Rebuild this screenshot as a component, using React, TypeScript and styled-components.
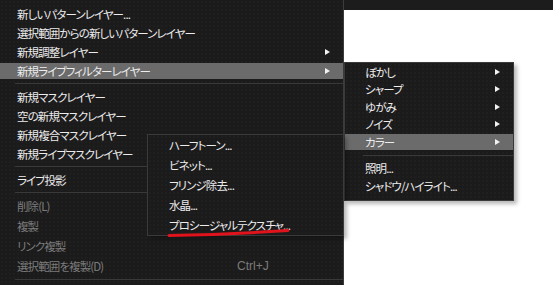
import styled, { createGlobalStyle, css } from "styled-components";

type Entry = {
  label?: string;
  shortcut?: string;
  sub?: boolean;
  active?: boolean;
  disabled?: boolean;
  sep?: boolean;
  tall?: boolean;
};

const mainItems: Entry[] = [
  { label: "新しいパターンレイヤー..." },
  { label: "選択範囲からの新しいパターンレイヤー" },
  { label: "新規調整レイヤー", sub: true },
  { label: "新規ライブフィルターレイヤー", sub: true, active: true },
  { sep: true },
  { label: "新規マスクレイヤー" },
  { label: "空の新規マスクレイヤー" },
  { label: "新規複合マスクレイヤー" },
  { label: "新規ライブマスクレイヤー" },
  { sep: true },
  { label: "ライブ投影" },
  { sep: true },
  { label: "削除(L)", disabled: true, tall: true },
  { label: "複製", disabled: true, tall: true },
  { label: "リンク複製", disabled: true, tall: true },
  { label: "選択範囲を複製(D)", shortcut: "Ctrl+J", disabled: true, tall: true },
  { sep: true },
];

const filterItems: Entry[] = [
  { label: "ぼかし", sub: true },
  { label: "シャープ", sub: true },
  { label: "ゆがみ", sub: true },
  { label: "ノイズ", sub: true },
  { label: "カラー", sub: true, active: true },
  { sep: true },
  { label: "照明..." },
  { label: "シャドウ/ハイライト..." },
];

const colorItems = [
  "ハーフトーン...",
  "ビネット...",
  "フリンジ除去...",
  "水晶...",
  "プロシージャルテクスチャ...",
];

const GlobalStyle = createGlobalStyle`
  html, body {
    margin: 0;
    padding: 0;
    background: #ffffff;
  }
  body {
    font-family: "Noto Sans CJK JP", "Noto Sans", sans-serif;
  }
`;

const Screen = styled.div`
  position: relative;
  display: flex;
  width: 553px;
  height: 285px;
  overflow: hidden;
  background: #ffffff;
`;

const menuSurface = css`
  box-sizing: border-box;
  margin: 0;
  list-style: none;
  background-color: #1c1b1c;
  background-image: radial-gradient(rgba(255, 255, 255, 0.03) 0.6px, transparent 0.9px);
  background-size: 4px 4px;
  color: #ececec;
  font-size: 11.5px;
  letter-spacing: -0.9px;
  font-feature-settings: "palt";
`;

const MainMenu = styled.ul`
  ${menuSurface}
  flex: none;
  width: 344px;
  padding: 4px 0 0;
  border-right: 1px solid #3c3c3c;
`;

const Workspace = styled.div`
  flex: 1;
  display: flex;
  flex-direction: column;
`;

const TopBar = styled.div`
  height: 10px;
  background: #1d1c1d;
`;

const Canvas = styled.div`
  flex: 1;
  background: #ffffff;
`;

const Popup = styled.ul<{ $left: number; $top: number; $width: number }>`
  ${menuSurface}
  position: absolute;
  left: ${(p) => p.$left}px;
  top: ${(p) => p.$top}px;
  width: ${(p) => p.$width}px;
  border: 1px solid #3a3a3a;
  box-shadow: 3px 3px 4px rgba(0, 0, 0, 0.28);
`;

const FilterMenu = styled(Popup)`
  padding: 0 0 5px;
`;

const ColorMenu = styled(Popup)`
  padding: 0;
`;

const Item = styled.li<{ $active?: boolean; $disabled?: boolean; $h: number }>`
  display: flex;
  align-items: center;
  height: ${(p) => p.$h}px;
  white-space: nowrap;
  color: ${(p) => (p.$disabled ? "#7b7b7b" : "#ececec")};
  ${(p) =>
    p.$active &&
    css`
      background: linear-gradient(#6b6b6b, #6b6b6b) center / 100% 16px no-repeat;
    `}
`;

const MainItem = styled(Item)`
  padding: 0 13px 0 17px;
`;

const FilterItem = styled(Item)`
  padding: 0 13px 0 20px;
`;

const ColorItem = styled(Item)`
  padding: 0 12px 0 21px;
`;

const Separator = styled.li<{ $inset: number; $space: number }>`
  height: 1px;
  margin: ${(p) => p.$space}px 0 ${(p) => p.$space}px ${(p) => p.$inset}px;
  background: #393939;
`;

const Arrow = styled.span`
  margin-left: auto;
  width: 0;
  height: 0;
  border-left: 5px solid #f2f2f2;
  border-top: 3.5px solid transparent;
  border-bottom: 3.5px solid transparent;
`;

const Shortcut = styled.span`
  margin-left: auto;
  width: 93px;
  font-family: "Liberation Sans", "Noto Sans", sans-serif;
  font-size: 12px;
  letter-spacing: 0;
`;

const Mark = styled.svg`
  position: absolute;
  left: 166px;
  top: 226px;
  overflow: visible;
`;

export default function App() {
  return (
    <>
      <GlobalStyle />
      <Screen>
        <MainMenu>
          {mainItems.map((it, i) =>
            it.sep ? (
              <Separator key={i} $inset={15} $space={3} />
            ) : (
              <MainItem key={i} $h={it.tall ? 20 : 19} $active={it.active} $disabled={it.disabled}>
                {it.label}
                {it.sub && <Arrow />}
                {it.shortcut && <Shortcut>{it.shortcut}</Shortcut>}
              </MainItem>
            )
          )}
        </MainMenu>
        <Workspace>
          <TopBar />
          <Canvas />
        </Workspace>

        <FilterMenu $left={344} $top={62} $width={170}>
          {filterItems.map((it, i) =>
            it.sep ? (
              <Separator key={i} $inset={18} $space={4} />
            ) : (
              <FilterItem key={i} $h={17.5} $active={it.active}>
                {it.label}
                {it.sub && <Arrow />}
              </FilterItem>
            )
          )}
        </FilterMenu>

        <ColorMenu $left={147} $top={134} $width={197}>
          {colorItems.map((label) => (
            <ColorItem key={label} $h={20}>
              {label}
            </ColorItem>
          ))}
        </ColorMenu>

        <Mark width="126" height="14" viewBox="0 0 126 14">
          <path
            d="M3 9.5 Q64 8.5 122 4.5"
            fill="none"
            stroke="#e0121c"
            strokeWidth="3"
            strokeLinecap="round"
          />
        </Mark>
      </Screen>
    </>
  );
}
